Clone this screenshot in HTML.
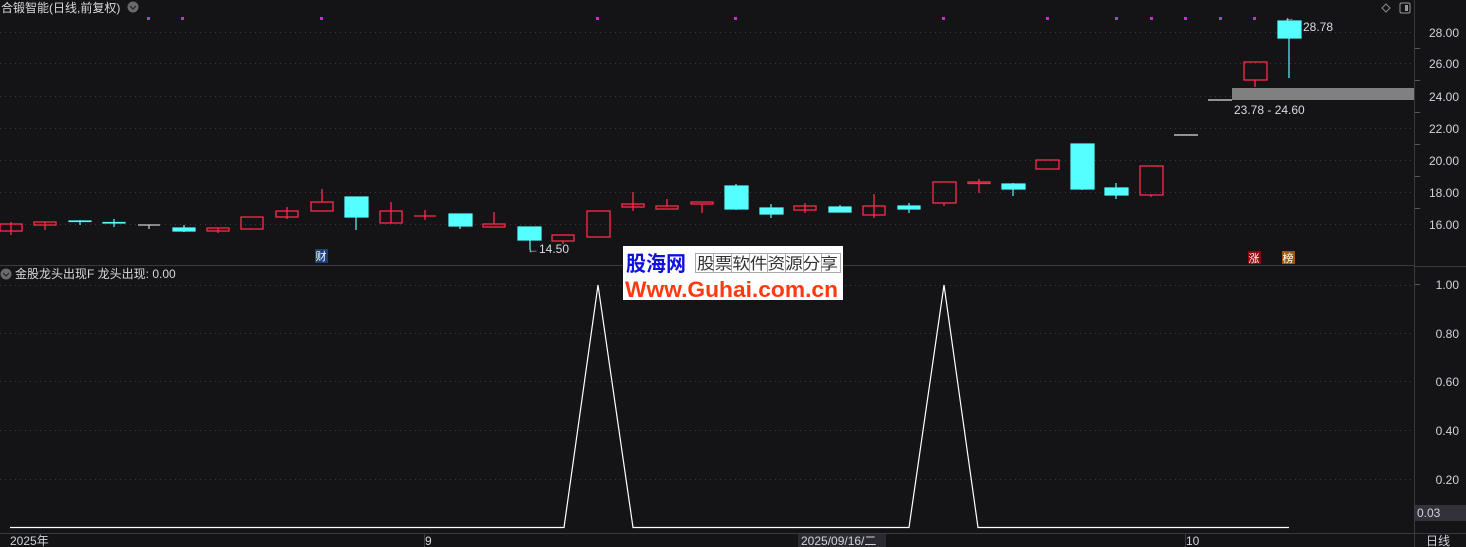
<!DOCTYPE html>
<html><head><meta charset="utf-8"><style>
html,body{margin:0;padding:0;background:#141316;width:1466px;height:547px;overflow:hidden}
svg{display:block}
text{font-family:"Liberation Sans","Noto Sans CJK SC",sans-serif}
</style></head><body>
<svg width="1466" height="547" viewBox="0 0 1466 547" xmlns="http://www.w3.org/2000/svg">
<rect width="1466" height="547" fill="#141316"/>
<g stroke="#3a3a44" stroke-dasharray="1,4" stroke-width="1">
<line x1="0" y1="32.5" x2="1414" y2="32.5"/><line x1="0" y1="63.5" x2="1414" y2="63.5"/>
<line x1="0" y1="96.5" x2="1414" y2="96.5"/><line x1="0" y1="128.5" x2="1414" y2="128.5"/>
<line x1="0" y1="160.5" x2="1414" y2="160.5"/><line x1="0" y1="192.5" x2="1414" y2="192.5"/>
<line x1="0" y1="224.5" x2="1414" y2="224.5"/>
<line x1="0" y1="285.5" x2="1414" y2="285.5"/><line x1="0" y1="333.5" x2="1414" y2="333.5"/>
<line x1="0" y1="381.5" x2="1414" y2="381.5"/><line x1="0" y1="430.5" x2="1414" y2="430.5"/>
<line x1="0" y1="479.5" x2="1414" y2="479.5"/>
</g>
<line x1="0" y1="265.5" x2="1414" y2="265.5" stroke="#3a3a44"/>
<line x1="0" y1="533.5" x2="1466" y2="533.5" stroke="#3a3a44"/>
<line x1="1414.5" y1="0" x2="1414.5" y2="547" stroke="#3a3a44"/>
<rect x="1415" y="266" width="51" height="1" fill="#3a3a44"/>
<g fill="#e020e0">
<rect x="147" y="17" width="3" height="3"/><rect x="181" y="17" width="3" height="3"/><rect x="320" y="17" width="3" height="3"/>
<rect x="596" y="17" width="3" height="3"/><rect x="734" y="17" width="3" height="3"/><rect x="942" y="17" width="3" height="3"/>
<rect x="1046" y="17" width="3" height="3"/><rect x="1115" y="17" width="3" height="3"/><rect x="1150" y="17" width="3" height="3"/>
<rect x="1184" y="17" width="3" height="3"/><rect x="1219" y="17" width="3" height="3"/><rect x="1253" y="17" width="3" height="3"/>
</g>
<g stroke="#ff2a4a" fill="none" stroke-width="1.3">
<line x1="11" y1="222" x2="11" y2="235"/><rect x="0" y="224" width="22" height="7"/>
<line x1="45" y1="222" x2="45" y2="230"/><rect x="34" y="222" width="22" height="3"/>
<line x1="218" y1="228" x2="218" y2="233"/><rect x="207" y="228" width="22" height="3"/>
<rect x="241" y="217" width="22" height="12"/>
<line x1="287" y1="207" x2="287" y2="219"/><rect x="276" y="211" width="22" height="6"/>
<line x1="322" y1="189" x2="322" y2="202"/><rect x="311" y="202" width="22" height="9"/>
<line x1="391" y1="202" x2="391" y2="223"/><rect x="380" y="211" width="22" height="12"/>
<line x1="425" y1="210" x2="425" y2="220"/><line x1="414" y1="216" x2="436" y2="216"/>
<line x1="494" y1="212" x2="494" y2="224"/><rect x="483" y="224" width="22" height="3"/>
<line x1="563" y1="241" x2="563" y2="244"/><rect x="552" y="235" width="22" height="6"/>
<rect x="587" y="211" width="23" height="26"/>
<line x1="633" y1="192" x2="633" y2="211"/><rect x="622" y="204" width="22" height="3"/>
<line x1="667" y1="199" x2="667" y2="206"/><rect x="656" y="206" width="22" height="3"/>
<line x1="702" y1="204" x2="702" y2="213"/><rect x="691" y="202" width="22" height="2"/>
<line x1="805" y1="203" x2="805" y2="213"/><rect x="794" y="206" width="22" height="4"/>
<line x1="874" y1="194" x2="874" y2="218"/><rect x="863" y="206" width="22" height="9"/>
<line x1="944" y1="203" x2="944" y2="206"/><rect x="933" y="182" width="23" height="21"/>
<line x1="979" y1="179" x2="979" y2="193"/><rect x="968" y="182" width="22" height="1.5"/>
<rect x="1036" y="160" width="23" height="9"/>
<line x1="1151" y1="195" x2="1151" y2="197"/><rect x="1140" y="166" width="23" height="29"/>
<line x1="1255" y1="80" x2="1255" y2="87"/><rect x="1244" y="62" width="23" height="18"/>
</g>
<g stroke="#55ffff" fill="#55ffff" stroke-width="1.2">
<line x1="80" y1="220" x2="80" y2="225"/><rect x="69" y="221" width="22" height="0.5"/>
<line x1="114" y1="219" x2="114" y2="227"/><rect x="103" y="222.5" width="22" height="0.5"/>
<line x1="184" y1="225" x2="184" y2="232"/><rect x="173" y="228" width="22" height="3"/>
<line x1="356" y1="210" x2="356" y2="230"/><rect x="345" y="197" width="23" height="20"/>
<line x1="460" y1="220" x2="460" y2="229"/><rect x="449" y="214" width="23" height="12"/>
<line x1="530" y1="236" x2="530" y2="250"/><rect x="518" y="227" width="23" height="13"/>
<line x1="736" y1="184" x2="736" y2="210"/><rect x="725" y="186" width="23" height="23"/>
<line x1="771" y1="204" x2="771" y2="218"/><rect x="760" y="208" width="23" height="6"/>
<line x1="840" y1="205" x2="840" y2="212"/><rect x="829" y="207" width="22" height="5"/>
<line x1="909" y1="203" x2="909" y2="213"/><rect x="898" y="206" width="22" height="3"/>
<line x1="1013" y1="183" x2="1013" y2="196"/><rect x="1002" y="184" width="23" height="5"/>
<line x1="1082" y1="185" x2="1082" y2="190"/><rect x="1071" y="144" width="23" height="45"/>
<line x1="1116" y1="183" x2="1116" y2="199"/><rect x="1105" y="188" width="23" height="7"/>
<line x1="1289" y1="35" x2="1289" y2="78"/><rect x="1278" y="21" width="23" height="17"/>
</g>
<g stroke="#c8ccd0" stroke-width="1.2"><line x1="138" y1="225" x2="160" y2="225"/><line x1="149" y1="225" x2="149" y2="229"/></g>
<line x1="1174" y1="135" x2="1198" y2="135" stroke="#ddd" stroke-width="1.3"/>
<line x1="1208" y1="100" x2="1232" y2="100" stroke="#ddd" stroke-width="1.3"/>
<rect x="1232" y="88" width="182" height="12" fill="#808080"/>
<g fill="#d8dce4" font-size="12">
<text x="1234" y="114">23.78 - 24.60</text>
<text x="1303" y="31">28.78</text>
<text x="527" y="253">←14.50</text>
</g>
<text x="1286" y="22" fill="#ccc" font-size="8">⇠</text>
<g fill="#d0d4dc" font-size="12" text-anchor="end">
<text x="1459" y="37">28.00</text><text x="1459" y="68">26.00</text><text x="1459" y="101">24.00</text>
<text x="1459" y="133">22.00</text><text x="1459" y="165">20.00</text><text x="1459" y="197">18.00</text>
<text x="1459" y="229">16.00</text>
<text x="1459" y="289">1.00</text><text x="1459" y="338">0.80</text><text x="1459" y="386">0.60</text>
<text x="1459" y="435">0.40</text><text x="1459" y="484">0.20</text>
</g>
<g stroke="#55555e"><line x1="1415" y1="48.5" x2="1420" y2="48.5"/><line x1="1415" y1="80.5" x2="1420" y2="80.5"/><line x1="1415" y1="112.5" x2="1420" y2="112.5"/><line x1="1415" y1="144.5" x2="1420" y2="144.5"/><line x1="1415" y1="176.5" x2="1420" y2="176.5"/><line x1="1415" y1="208.5" x2="1420" y2="208.5"/><line x1="1415" y1="284.5" x2="1420" y2="284.5"/></g>
<rect x="1415" y="505" width="51" height="16" fill="#33323a"/>
<text x="1417" y="517" fill="#d0d4dc" font-size="12">0.03</text>
<path d="M1386 4 L1390 8 L1386 12 L1382 8 Z" fill="none" stroke="#888"/>
<rect x="1400" y="3" width="10" height="10" rx="1.5" fill="none" stroke="#999"/><rect x="1405" y="5" width="3" height="6" fill="#999"/>
<text x="1" y="12" fill="#d8d8d8" font-size="12">合锻智能(日线,前复权)</text>
<circle cx="133" cy="7" r="5.5" fill="#6a6a6e"/><path d="M130 6 L133 9 L136 6" stroke="#222" fill="none" stroke-width="1.2"/>
<circle cx="6" cy="274" r="5.5" fill="#6a6a6e"/><path d="M3 273 L6 276 L9 273" stroke="#222" fill="none" stroke-width="1.2"/>
<text x="15" y="278" fill="#d8d8d8" font-size="12">金股龙头出现F  龙头出现: 0.00</text>
<rect x="315" y="249" width="13" height="14" fill="#1a3f7a"/><text x="315.5" y="260" fill="#fff" font-size="11">财</text>
<rect x="1248" y="251" width="13" height="13" fill="#8a0a0a"/><text x="1248.5" y="262" fill="#fff" font-size="11">涨</text>
<rect x="1282" y="251" width="13" height="13" fill="#a05808"/><text x="1282.5" y="262" fill="#fff" font-size="11">榜</text>
<polyline points="10,527.5 564,527.5 598,285 633,527.5 909,527.5 944,285 978,527.5 1289,527.5" fill="none" stroke="#ffffff" stroke-width="1.2"/>
<g fill="#d0d4dc" font-size="12">
<text x="10" y="545">2025年</text><text x="425" y="545">9</text><text x="1186" y="545">10</text><text x="1426" y="545">日线</text>
</g>
<line x1="424.5" y1="534" x2="424.5" y2="547" stroke="#3a3a44"/><line x1="1185.5" y1="534" x2="1185.5" y2="547" stroke="#3a3a44"/>
<rect x="798" y="534" width="88" height="13" fill="#2a2a30"/>
<text x="801" y="545" fill="#d0d4dc" font-size="12">2025/09/16/二</text>
<rect x="623" y="246" width="220" height="54" fill="#ffffff"/>
<text x="626" y="271" fill="#1010e0" font-size="21" font-weight="bold" textLength="60" lengthAdjust="spacingAndGlyphs">股海网</text>
<g stroke="#aaa" fill="none"><rect x="695.5" y="253.5" width="145" height="19"/>
<line x1="713.5" y1="254" x2="713.5" y2="272"/><line x1="731.5" y1="254" x2="731.5" y2="272"/><line x1="749.5" y1="254" x2="749.5" y2="272"/><line x1="767.5" y1="254" x2="767.5" y2="272"/><line x1="785.5" y1="254" x2="785.5" y2="272"/><line x1="803.5" y1="254" x2="803.5" y2="272"/><line x1="821.5" y1="254" x2="821.5" y2="272"/></g>
<text x="697" y="269" fill="#333" font-size="16" textLength="141" lengthAdjust="spacingAndGlyphs">股票软件资源分享</text>
<text x="625" y="297" fill="#ff3a10" font-size="22" font-weight="bold" textLength="213" lengthAdjust="spacingAndGlyphs">Www.Guhai.com.cn</text>
</svg>
</body></html>
